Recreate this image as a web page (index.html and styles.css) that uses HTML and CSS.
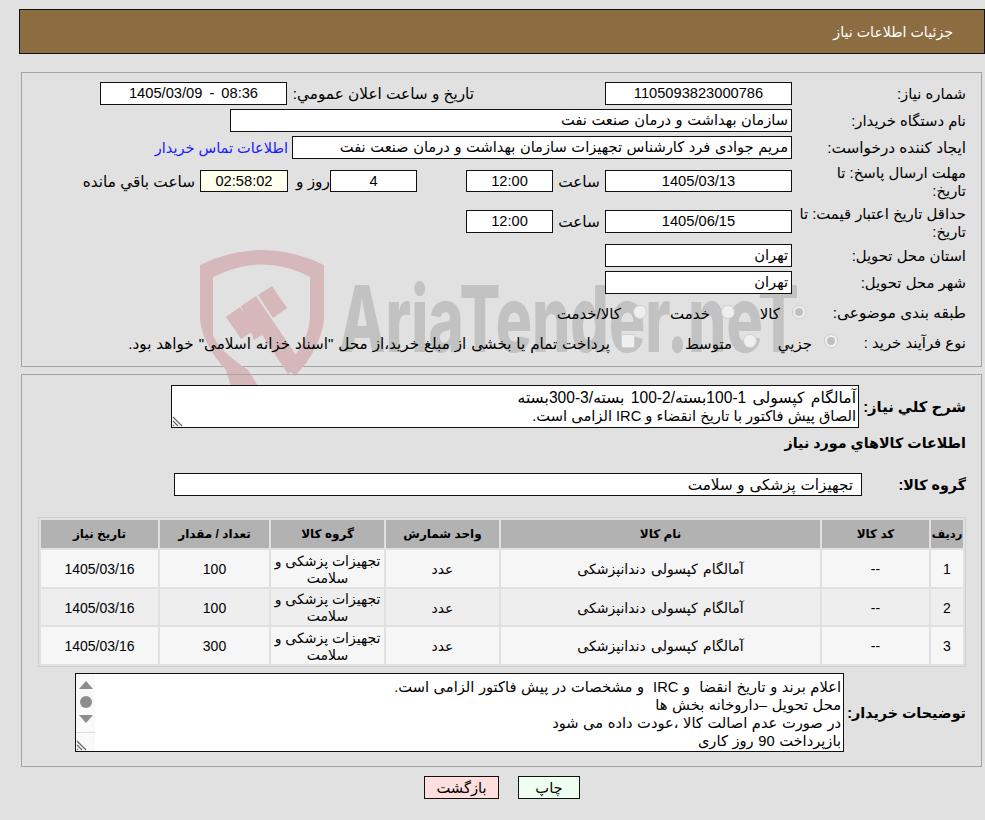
FILE: index.html
```html
<!DOCTYPE html>
<html lang="fa" dir="rtl">
<head>
<meta charset="utf-8">
<title>جزئیات اطلاعات نیاز</title>
<link rel="stylesheet" href="styles.css">
</head>
<body>
<div class="page">
  <header class="title-bar">جزئیات اطلاعات نیاز</header>

  <section class="panel info-panel">
    <svg class="watermark" width="640" height="170" viewBox="190 240 640 170" aria-hidden="true">
      <path class="wm-shield" d="M200 265 Q262 235 324 265 L324 320 Q320 350 295 376 L285 366 Q308 345 310 318 L310 277 Q262 252 213 277 L213 335 Q218 350 248 370 L258 386 L231 386 L226 370 Q203 345 200 320 Z"/>
      <path class="wm-shield" d="M258 295 L272 286 L287 308 L273 318 Z M241 306 L256 296 L277 327 L302 364 L288 374 L262 335 L254 340 Z M226 317 L240 307 L255 330 L241 339 Z"/>
      <text class="wm-text" x="339" y="352" textLength="460" lengthAdjust="spacingAndGlyphs">AriaTender.neT</text>
    </svg>
    <div class="form">
      <div class="row r1">
        <label class="lbl">شماره نیاز:</label>
        <div class="box num w187">1105093823000786</div>
        <label class="announce">تاریخ و ساعت اعلان عمومي:</label>
        <div class="box num w187 ltr">1405/03/09 - 08:36</div>
      </div>
      <div class="row r2">
        <label class="lbl">نام دستگاه خریدار:</label>
        <div class="box text w562">سازمان بهداشت و درمان صنعت نفت</div>
      </div>
      <div class="row r3">
        <label class="lbl wide">ایجاد کننده درخواست:</label>
        <div class="box text w500">مریم جوادی فرد کارشناس تجهیزات سازمان بهداشت و درمان صنعت نفت</div>
        <a class="link" href="#">اطلاعات تماس خریدار</a>
      </div>
      <div class="row r4">
        <label class="lbl tall">مهلت ارسال پاسخ: تا<br>تاریخ:</label>
        <div class="box num w187 short">1405/03/13</div>
        <span class="unit">ساعت</span>
        <div class="box num w87 short">12:00</div>
        <div class="box num w87 short days">4</div>
        <span class="unit u2">روز و</span>
        <div class="box num short timer">02:58:02</div>
        <span class="unit u3">ساعت باقي مانده</span>
      </div>
      <div class="row r5">
        <label class="lbl tall">حداقل تاریخ اعتبار قیمت: تا<br>تاریخ:</label>
        <div class="box num w187">1405/06/15</div>
        <span class="unit">ساعت</span>
        <div class="box num w87">12:00</div>
      </div>
      <div class="row r6">
        <label class="lbl">استان محل تحویل:</label>
        <div class="box text w187">تهران</div>
      </div>
      <div class="row r7">
        <label class="lbl">شهر محل تحویل:</label>
        <div class="box text w187">تهران</div>
      </div>
      <div class="row r8">
        <label class="lbl wide l8">طبقه بندی موضوعی:</label>
        <span class="radio on"></span><span class="opt o1">کالا</span>
        <span class="radio"></span><span class="opt o2">خدمت</span>
        <span class="radio"></span><span class="opt">کالا/خدمت</span>
      </div>
      <div class="row r9">
        <label class="lbl l9">نوع فرآیند خرید :</label>
        <span class="radio on"></span><span class="opt p1">جزيي</span>
        <span class="radio"></span><span class="opt p2">متوسط</span>
        <span class="check"></span><span class="opt treasury">پرداخت تمام یا بخشی از مبلغ خرید،از محل "اسناد خزانه اسلامی" خواهد بود.</span>
      </div>
    </div>
  </section>

  <section class="panel goods-panel">
    <div class="desc-row">
      <label class="blbl">شرح کلي نیاز:</label>
      <div class="area desc"><span class="first-line">آمالگام کپسولی 1-100بسته/2-100 بسته/3-300بسته</span><br>الصاق پیش فاکتور با تاریخ انقضاء و IRC الزامی است.<svg class="grip" width="11" height="11" viewBox="0 0 11 11" aria-hidden="true"><path d="M1 1 L10 10 M1 5 L6 10 M1 9 L2 10"/></svg></div>
    </div>
    <h2 class="subhead">اطلاعات کالاهاي مورد نیاز</h2>
    <div class="group-row">
      <label class="blbl">گروه کالا:</label>
      <div class="box group">تجهیزات پزشکی و سلامت</div>
    </div>
    <table class="grid">
      <thead>
        <tr><th class="c1">ردیف</th><th class="c2">کد کالا</th><th class="c3">نام کالا</th><th class="c4">واحد شمارش</th><th class="c5">گروه کالا</th><th class="c6">تعداد / مقدار</th><th class="c7">تاریخ نیاز</th></tr>
      </thead>
      <tbody>
        <tr><td>1</td><td>--</td><td>آمالگام کپسولی دندانپزشکی</td><td>عدد</td><td class="cat">تجهیزات پزشکی و سلامت</td><td>100</td><td>1405/03/16</td></tr>
        <tr><td>2</td><td>--</td><td>آمالگام کپسولی دندانپزشکی</td><td>عدد</td><td class="cat">تجهیزات پزشکی و سلامت</td><td>100</td><td>1405/03/16</td></tr>
        <tr><td>3</td><td>--</td><td>آمالگام کپسولی دندانپزشکی</td><td>عدد</td><td class="cat">تجهیزات پزشکی و سلامت</td><td>300</td><td>1405/03/16</td></tr>
      </tbody>
    </table>
    <div class="note-row">
      <label class="blbl">توضیحات خریدار:</label>
      <div class="area note">
        <div class="note-text">اعلام برند و تاریخ انقضا  و IRC  و مشخصات در پیش فاکتور الزامی است.<br>محل تحویل –داروخانه بخش ها<br>در صورت عدم اصالت کالا ،عودت داده می شود<br>بازپرداخت 90 روز کاری</div>
        <div class="scroll" aria-hidden="true">
          <span class="sb-up"></span><span class="sb-dot"></span><span class="sb-down"></span>
          <span class="sb-corner"><svg class="grip" width="11" height="11" viewBox="0 0 11 11"><path d="M1 1 L10 10 M1 5 L6 10 M1 9 L2 10"/></svg></span>
        </div>
      </div>
    </div>
  </section>

  <div class="actions">
    <button class="btn print" type="button">چاپ</button>
    <button class="btn back" type="button">بازگشت</button>
  </div>
</div>
</body>
</html>
```

FILE: styles.css
```css
* { box-sizing: border-box; }
html, body { margin: 0; padding: 0; }
body {
  width: 985px; height: 820px; overflow: hidden;
  background: #e1e1e1; color: #000;
  font-family: "Liberation Sans", "DejaVu Sans", sans-serif;
  font-size: 14.67px; line-height: 18px;
}
.page { padding: 9px 0 0 19px; }
.title-bar {
  height: 45px; background: #8c6d41; border: 1px solid #111; color: #fff;
  padding: 13px 31px 0 0; font-size: 14.2px;
}
.panel { border: 1px solid #a3a3a3; position: relative; margin: 0 3px 0 2px; }
.info-panel { height: 295px; margin-top: 18px; }
.watermark { position: absolute; left: 168px; top: 167px; direction: ltr; overflow: visible; }
.wm-shield { fill: #d6b8ba; }
.wm-text { font: 800 92px "Inter", "Liberation Sans", sans-serif; fill: #c2c2c2; }
.form { position: relative; padding: 9px 15px 0 0; }
.row { display: flex; align-items: flex-start; }
.lbl { width: 170px; margin-left: 4px; flex: none; padding-top: 3px; font-size: 14.85px; }
.lbl.wide { font-size: 15.3px; white-space: nowrap; }
.box { background: #fff; border: 1px solid #111; height: 23px; flex: none; line-height: 21px; }
.num { text-align: center; }
.ltr { direction: ltr; word-spacing: 3px; }
.text { padding-right: 3px; word-spacing: 0.5px; }
.w187 { width: 187px; }
.w87 { width: 87px; }
.w562 { width: 562px; }
.w500 { width: 500px; }
.r1, .r2, .r6, .r7 { height: 27px; }
.r3 { height: 28px; }
.r4 { height: 41px; }
.r5 { height: 39px; }
.r8 { height: 30px; }
.r9 { height: 30px; }
.announce { width: 181px; margin-right: 131px; margin-left: 6px; flex: none; padding-top: 3px; white-space: nowrap; font-size: 15.3px; }
.link { color: #1a1aff; text-decoration: none; padding: 3px 4px 0 0; white-space: nowrap; font-size: 14.5px; }
.tall { padding-top: 0; }
.short { height: 22px; line-height: 20px; }
.r4 .box, .r4 .unit { margin-top: 6px; }
.r5 .box, .r5 .unit { margin-top: 5px; }
.unit { width: 52px; text-align: center; padding-top: 3px; flex: none; font-size: 15.3px; }
.days { margin-right: 49px; }
.u2 { width: 42px; text-align: left; padding-left: 8px; }
.timer { width: 88px; background: #ffffee; }
.u3 { width: auto; padding-right: 5px; white-space: nowrap; }
.l8 { width: 160px; margin-left: 0; padding-top: 6px; white-space: nowrap; }
.l9 { width: 128px; margin-left: 0; padding-top: 6px; white-space: nowrap; }
.radio { width: 14px; height: 14px; border-radius: 50%; background: #efefef; border: 1px solid #d0d0d0; flex: none; position: relative; margin-top: 7px; }
.r9 .radio, .check { margin-top: 6px; }
.radio.on { background: #f2f2f2; border-color: #cccccc; }
.radio.on::after { content: ""; position: absolute; inset: 2px; border-radius: 50%; background: #bfbfbf; }
.check { width: 14px; height: 14px; background: #efefef; border: 1px solid #d0d0d0; flex: none; border-radius: 2px; }
.opt { white-space: nowrap; margin-right: 12px; padding-top: 7px; flex: none; font-size: 15px; }
.o1 { width: 45px; }
.o2 { width: 63px; margin-right: 11px; }
.p1 { width: 55px; }
.p2 { width: 97px; margin-right: 11px; }
.treasury { font-size: 15.2px; word-spacing: 0.7px; margin-right: 11px; }
.goods-panel { height: 393px; margin-top: 7px; padding: 10px 15px 0 0; }
.desc-row { display: flex; }
.blbl { font-weight: bold; flex: none; white-space: nowrap; font-size: 14.3px; }
.desc-row .blbl { width: 107px; padding-top: 13px; font-size: 14.8px; }
.area { background: #fff; border: 1px solid #111; position: relative; }
.desc { width: 688px; height: 43px; padding: 3px 2px 0; flex: none; }
.first-line { font-size: 15.6px; word-spacing: 2px; }
.grip { position: absolute; left: 0; bottom: 0; stroke: #666; stroke-width: 1.2; fill: none; }
.subhead { font-size: 14.3px; margin: 6px 0 0; height: 18px; line-height: 18px; }
.group-row { display: flex; margin-top: 21px; height: 23px; }
.group-row .blbl { width: 104px; padding-top: 3px; }
.box.group { width: 688px; padding-right: 8px; font-size: 15.2px; word-spacing: 0.5px; }
.grid { width: 928px; margin: 21px 0 0; border: 1px solid #cfcfcf; border-collapse: separate; border-spacing: 2px; table-layout: fixed; text-align: center; font-size: 14px; }
.grid th { background: #b2b2b2; height: 28px; padding: 0; font-size: 12px; }
.grid th.c1 { font-size: 11.5px; }
.grid td { height: 37px; padding: 2px 0 0; background: #f6f6f6; line-height: 17px; word-spacing: 1.5px; }
.grid td.cat { word-spacing: 0; }
.grid tbody tr:nth-child(2) td { background: #eeeeee; height: 36px; }
.c1 { width: 32px; } .c2 { width: 107px; } .c3 { width: 319px; } .c4 { width: 113px; } .c5 { width: 113px; } .c6 { width: 109px; } .c7 { width: 117px; }
.note-row { display: flex; margin-top: 6px; }
.note-row .blbl { width: 122px; padding-top: 31px; }
.note { width: 769px; height: 79px; flex: none; }
.note-text { padding: 4px 2px 0; white-space: pre-wrap; word-spacing: 0.5px; }
.scroll { position: absolute; left: 0; top: 0; bottom: 0; width: 19px; background: #f9f9f9; display: flex; flex-direction: column; align-items: center; }
.sb-up { width: 0; height: 0; border: 7px solid transparent; border-top: 0; border-bottom: 8px solid #8c8c8c; margin-top: 7px; }
.sb-dot { width: 12px; height: 12px; border-radius: 50%; background: #8c8c8c; margin-top: 7px; }
.sb-down { width: 0; height: 0; border: 7px solid transparent; border-bottom: 0; border-top: 8px solid #8c8c8c; margin-top: 7px; }
.sb-corner { position: absolute; left: 0; bottom: 0; width: 19px; height: 19px; border-top: 1px solid #ddd; }
.actions { display: flex; justify-content: center; gap: 19px; margin-top: 9px; }
.btn { height: 23px; font: 14.67px "Liberation Sans", "DejaVu Sans", sans-serif; border: 1px solid #111; color: #000; padding: 0; }
.print { width: 62px; background: #efffef; }
.back { width: 75px; background: #ffdede; }
```
